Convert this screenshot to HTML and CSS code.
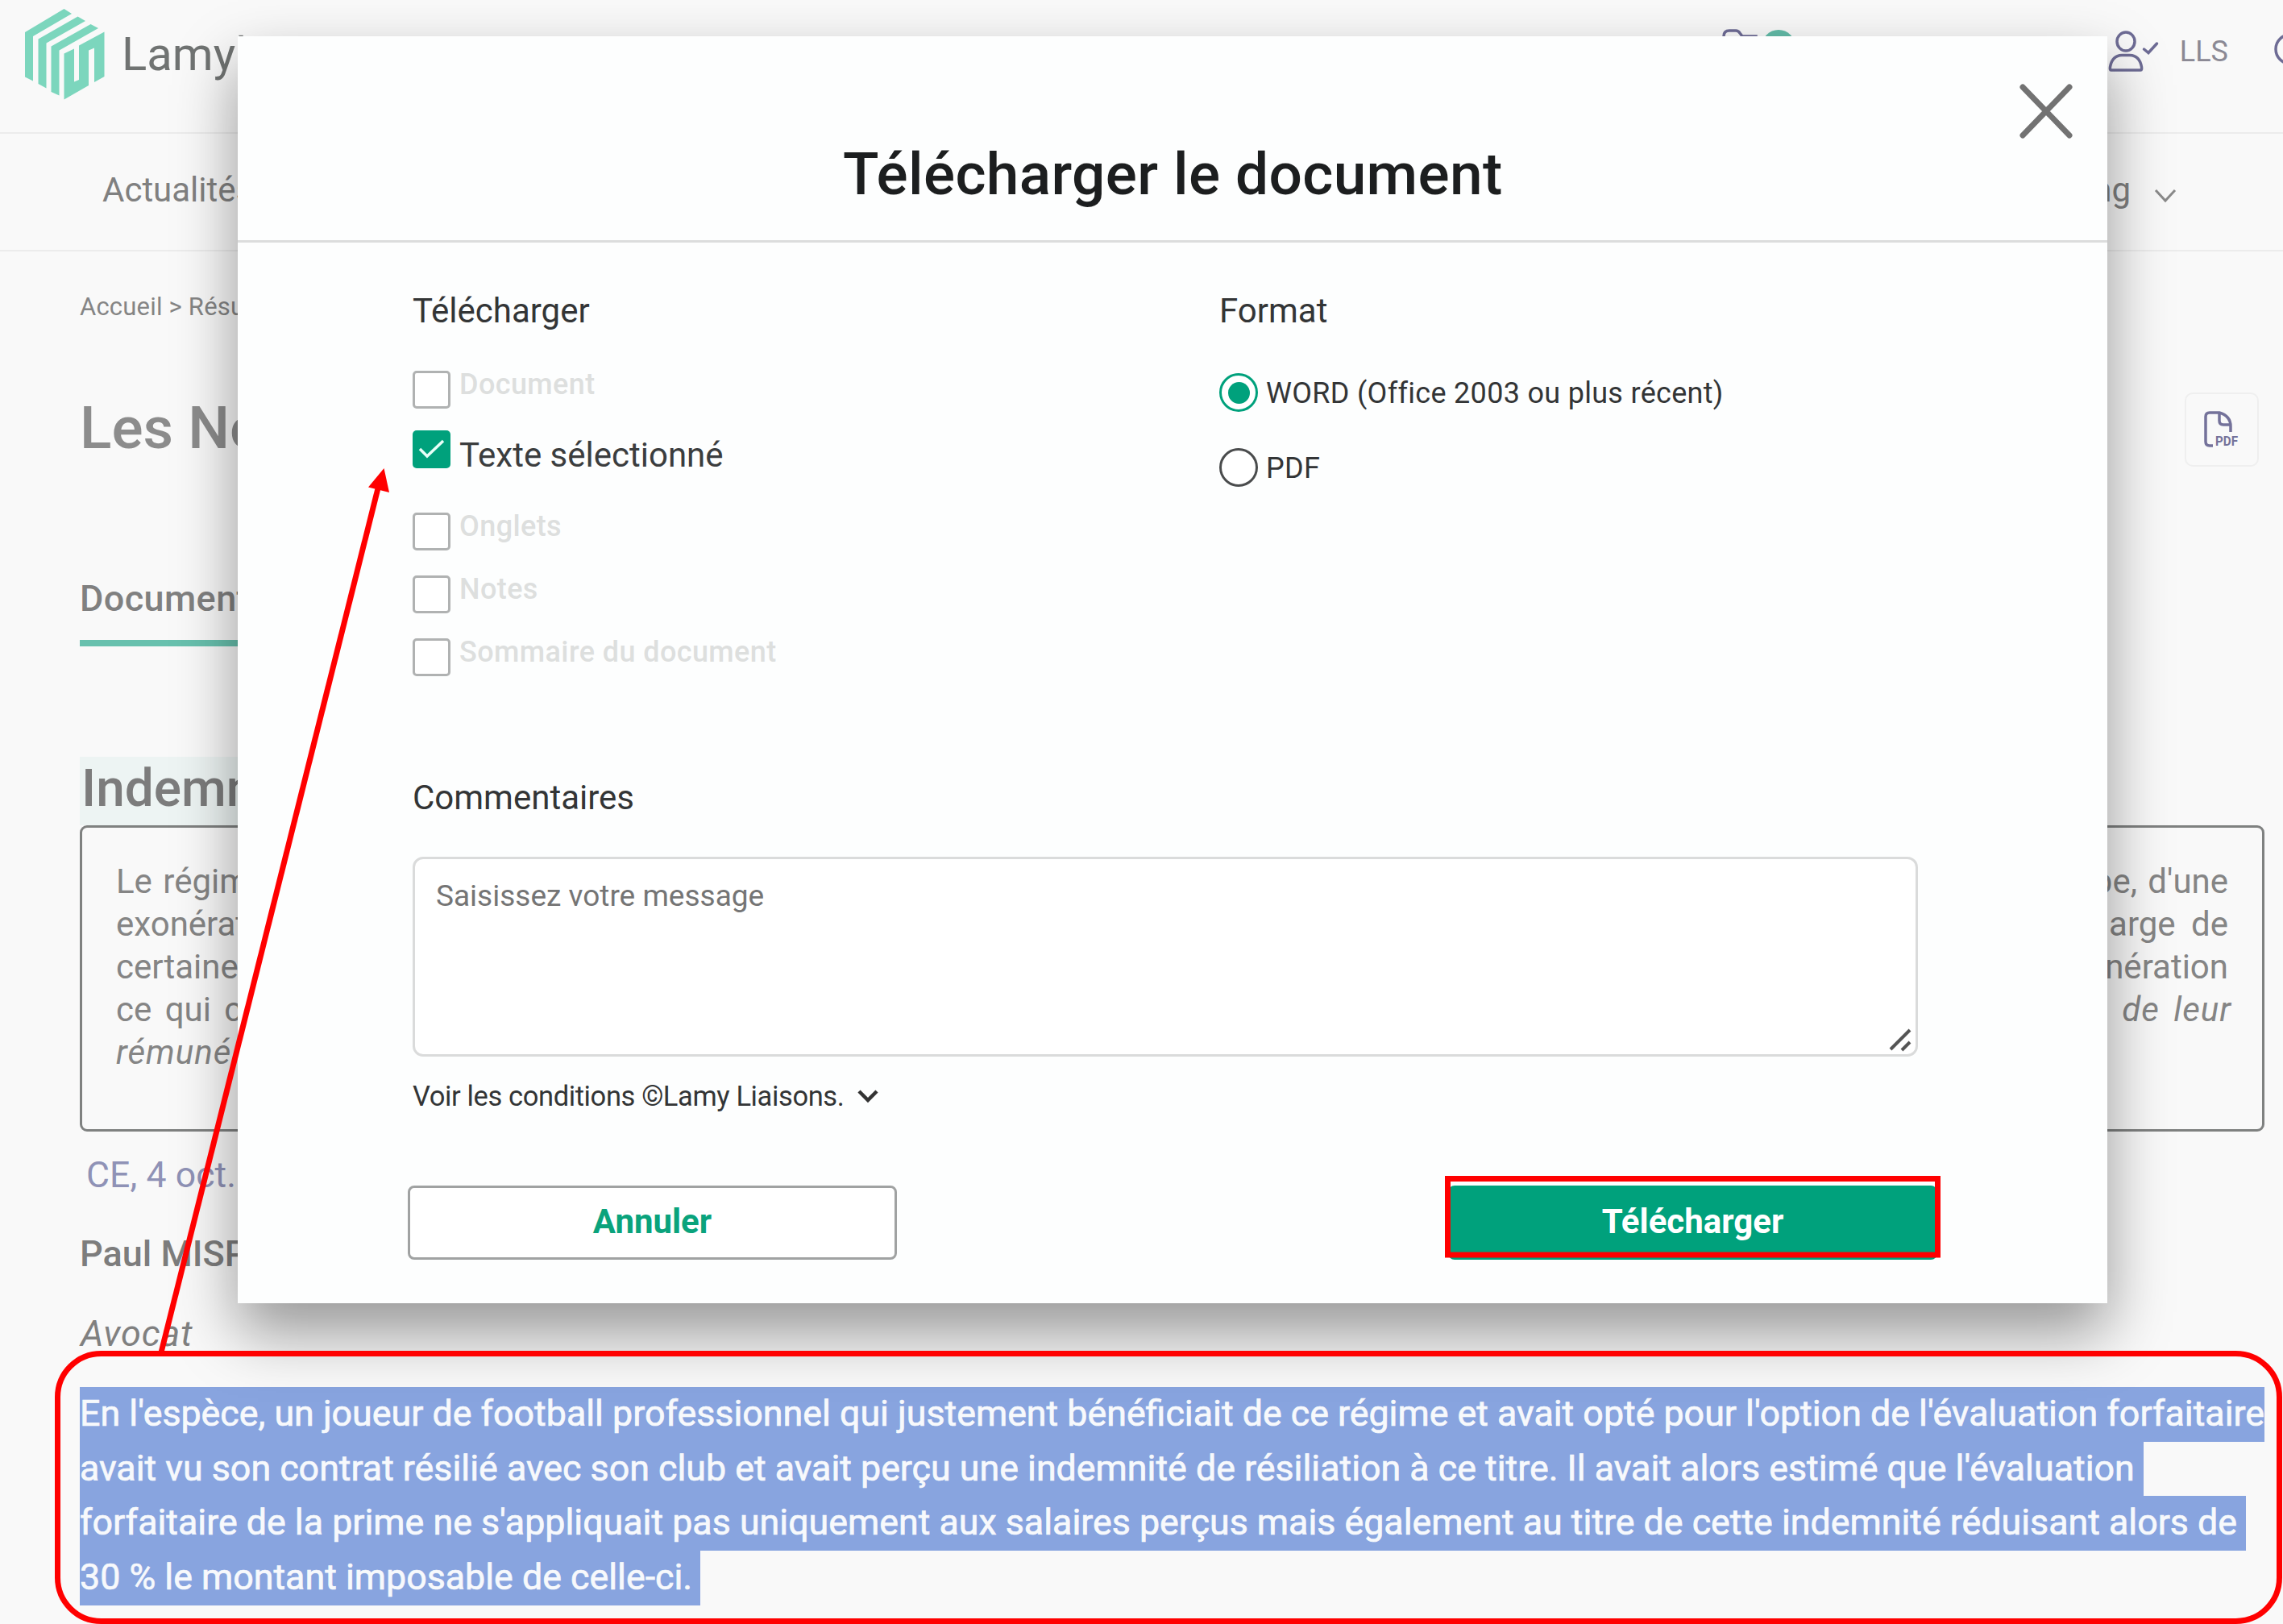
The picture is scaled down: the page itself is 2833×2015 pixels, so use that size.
FILE: index.html
```html
<!DOCTYPE html>
<html lang="fr">
<head>
<meta charset="utf-8">
<title>Télécharger le document</title>
<link rel="stylesheet" href="styles.css">
</head>
<body>
<div class="page">
  <header class="topbar">
    <div class="brand">
      <svg class="brand-logo" width="102" height="116" viewBox="30 9 102 116"><path d="M31 40 79.500 11 89 17 41 45V100.500L31 95.500ZM47.500 48.500 96.500 20.500 106 26 57.500 53.500V109.500L47.500 104ZM63.500 57.500 112.500 30 122 35 73.500 62.500V118.500L63.500 114ZM79.500 66.500 92 60.500V101.500L98 99V56.500L129.500 39.500V95L117 102V59.500L110 62.500V106L79.500 123.500Z"/></svg>
      <span class="brand-name">Lamyline</span>
    </div>
    <div class="tools">
      <svg class="tool-folder" width="100" height="50" viewBox="0 0 100 50"><path d="M4 46V13Q4 6 11 6H19Q22 6 24 9L27 13H44V46Z"/><circle cx="72" cy="26" r="21"/></svg>
      <svg class="tool-user" width="64" height="52" viewBox="0 0 64 52"><ellipse cx="22" cy="13.500" rx="11" ry="11.500"/><path d="M3.500 49Q2 49 2.500 45Q5 31 17 30.500H27Q39 31 41.500 45Q42 49 40.500 49ZM44.500 23 50 27.500 60.500 16"/></svg>
      <span class="tool-label">LLS</span>
      <svg class="tool-help" width="12" height="44" viewBox="0 0 12 44"><circle cx="21" cy="22" r="18"/></svg>
    </div>
  </header>
  <nav class="menu">
    <span class="menu-item">Actualités</span>
    <span class="menu-item menu-last">ng<svg width="28" height="18" viewBox="0 0 28 18"><path d="M2 2 14 15 26 2"/></svg></span>
  </nav>
  <main class="content">
    <div class="crumbs">Accueil &gt; Résu</div>
    <div class="title-row">
      <h1 class="doc-title">Les No</h1>
      <span class="pdf-button">
        <svg width="44" height="46" viewBox="0 0 44 46"><path d="M11 43H7Q2 43 2 38V7Q2 2 7 2H19Q33 6 33 19V26M19 2V12Q19 17 24 17H33"/><text x="14" y="43" textLength="28" lengthAdjust="spacingAndGlyphs">PDF</text></svg>
      </span>
    </div>
    <div class="tab">Document</div>
    <h2 class="article-title">Indemnit</h2>
    <div class="abstract">
      <div class="abstract-line"><span>Le régime</span><span>pe, d'une</span></div>
      <div class="abstract-line"><span>exonération</span><span class="wide">arge de</span></div>
      <div class="abstract-line"><span>certaines</span><span>nération</span></div>
      <div class="abstract-line"><span class="spaced">ce qui c</span><i class="last-word">de leur</i></div>
      <div class="abstract-line"><i>rémuné</i></div>
    </div>
    <div class="reference">CE, 4 oct.</div>
    <div class="author">Paul MISP</div>
    <div class="role">Avocat</div>
    <div class="selection">
      <div class="sel sel-1">En l'espèce, un joueur de football professionnel qui justement bénéficiait de ce régime et avait opté pour l'option de l'évaluation forfaitaire</div>
      <div class="sel sel-2">avait vu son contrat résilié avec son club et avait perçu une indemnité de résiliation à ce titre. Il avait alors estimé que l'évaluation</div>
      <div class="sel sel-3">forfaitaire de la prime ne s'appliquait pas uniquement aux salaires perçus mais également au titre de cette indemnité réduisant alors de</div>
      <div class="sel sel-4">30 % le montant imposable de celle-ci.</div>
    </div>
  </main>
</div>

<section class="modal">
  <header class="modal-head">
    <h2 class="modal-title">Télécharger le document</h2>
    <svg class="modal-close" width="68" height="70" viewBox="0 0 68 70"><path d="M5 5 63 65M63 5 5 65"/></svg>
  </header>
  <div class="modal-body">
    <div class="options">
      <div class="group">
        <h3 class="label">Télécharger</h3>
        <ul class="checks">
          <li class="check"><span class="box"></span><span class="check-text">Document</span></li>
          <li class="check checked"><span class="box"><svg width="33" height="28" viewBox="0 0 33 28"><path d="M2 13 11 22 31 3"/></svg></span><span class="check-text">Texte sélectionné</span></li>
          <li class="check"><span class="box"></span><span class="check-text">Onglets</span></li>
          <li class="check"><span class="box"></span><span class="check-text">Notes</span></li>
          <li class="check"><span class="box"></span><span class="check-text">Sommaire du document</span></li>
        </ul>
      </div>
      <div class="group">
        <h3 class="label">Format</h3>
        <ul class="radios">
          <li class="radio on"><span class="dot"></span><span class="radio-text">WORD (Office 2003 ou plus récent)</span></li>
          <li class="radio"><span class="dot"></span><span class="radio-text">PDF</span></li>
        </ul>
      </div>
    </div>
    <h3 class="label">Commentaires</h3>
    <div class="message">
      <span>Saisissez votre message</span>
      <svg class="grip" width="30" height="32" viewBox="0 0 30 32"><path d="M3 29 27 5M17 30 27 20"/></svg>
    </div>
    <div class="terms"><span>Voir les conditions ©Lamy Liaisons.</span><svg width="28" height="18" viewBox="0 0 28 18"><path d="M3 3 14 14 25 3"/></svg></div>
    <div class="actions">
      <div class="button cancel"><span>Annuler</span></div>
      <div class="button submit"><span>Télécharger</span></div>
    </div>
  </div>
</section>

<svg class="notes" width="2833" height="2015" viewBox="0 0 2833 2015">
  <rect x="71.500" y="1679.500" width="2757" height="332" rx="54"/>
  <rect x="1796.500" y="1462.500" width="608" height="94.500"/>
  <path d="M200 1678 469 606"/>
  <path class="head" d="M476.500 581 457 604.500 483 611Z"/>
</svg>
</body>
</html>
```
FILE: styles.css
```css
* { box-sizing: border-box; }
body {
  margin: 0;
  position: relative;
  width: 2833px;
  height: 2015px;
  overflow: hidden;
  background: #f9f9f9;
  font-family: Roboto, "Liberation Sans", sans-serif;
  color: #808080;
}
h1, h2, h3, ul { margin: 0; padding: 0; font-weight: 400; list-style: none; }
svg { display: block; flex: none; fill: none; }
span, i, div, h1, h2, h3 { white-space: nowrap; }

.topbar { display: flex; justify-content: space-between; height: 166px; border-bottom: 2px solid #ececec; }
.brand { display: flex; align-items: flex-start; gap: 19px; padding: 9px 0 0 30px; }
.brand-logo { fill: #7cd6bd; }
.brand-name { font-size: 58px; line-height: 117px; color: #707372; }
.tools { display: flex; align-items: flex-start; stroke: #6e6c95; stroke-width: 3.500px; }
.tool-folder { margin: 32px 381px 0 0; }
.tool-folder circle { fill: #62bca8; stroke: none; }
.tool-user { margin: 38px 25px 0 0; stroke-linecap: round; }
.tool-label { font-size: 36px; line-height: 44px; margin: 42px 56px 0 0; color: #8b8994; }
.tool-help { margin-top: 39px; }

.menu { display: flex; justify-content: space-between; align-items: center; height: 146px; padding: 0 132px 5px 127px; border-bottom: 2px solid #ececec; }
.menu-item { font-size: 42px; line-height: 50px; color: #808080; }
.menu-last { display: flex; align-items: center; gap: 29px; }
.menu-last svg { margin-top: 14px; stroke: #8a8a8a; stroke-width: 3px; }

.content { padding: 0 0 0 99px; }
.crumbs { margin-top: 49px; font-size: 31px; line-height: 40px; letter-spacing: .2px; color: #858585; }
.title-row { display: flex; justify-content: space-between; margin-top: 86px; padding-right: 30px; }
.doc-title { font-size: 73px; line-height: 89px; font-weight: 500; color: #8c8c8c; }
.pdf-button { display: flex; align-items: center; justify-content: center; width: 92px; height: 92px; border: 2px solid #efefef; border-radius: 10px; stroke: #74729a; stroke-width: 3.500px; }
.pdf-button svg { overflow: visible; }
.pdf-button text { font: 700 16px Roboto, sans-serif; fill: #74729a; stroke: none; }
.tab { width: 260px; margin-top: 134px; padding-bottom: 21px; border-bottom: 8px solid #68c1ae; font-size: 45px; line-height: 60px; font-weight: 500; letter-spacing: .4px; color: #808080; }
.article-title { width: 300px; margin-top: 137px; padding: 0 0 5px 2px; background: #edf4f3; font-size: 64px; line-height: 80px; font-weight: 500; color: #7c7c7c; }
.abstract { width: 2711px; height: 380px; padding: 40px 42px 0 42px; border: 3px solid #7f8180; border-radius: 9px; font-size: 42px; line-height: 53px; color: #858585; word-spacing: 3px; }
.abstract-line { display: flex; justify-content: space-between; }
.abstract i { letter-spacing: 1px; }
.wide { word-spacing: 9px; }
.spaced { word-spacing: 6px; }
.last-word { margin-right: -4px; word-spacing: 6px; }
.reference { margin: 24px 0 0 8px; font-size: 44.500px; line-height: 60px; letter-spacing: .1px; color: #8f92b6; }
.author { margin-top: 38px; font-size: 45px; line-height: 60px; font-weight: 500; color: #7d7d7d; }
.role { margin: 39px 0 0 1px; font-size: 45px; line-height: 60px; font-style: italic; letter-spacing: .9px; }
.selection { margin-top: 36px; font-size: 44.750px; line-height: 65px; color: #f7f9fc; -webkit-text-stroke: .7px #f7f9fc; }
.sel { height: 67.700px; background: #88a4df; }
.sel-1 { width: 2711px; }
.sel-2 { width: 2561px; }
.sel-3 { width: 2688px; }
.sel-4 { width: 770px; }

.modal { position: absolute; left: 295px; top: 45px; width: 2320px; height: 1572px; background: #fdfefe; box-shadow: 0 36px 72px rgba(0, 0, 0, .4); color: #333536; }
.modal-head { display: flex; align-items: flex-start; height: 256px; border-bottom: 3px solid #dcdddd; padding-left: 751px; }
.modal-title { flex: 1; margin-top: 126px; font-size: 73px; line-height: 90px; font-weight: 500; letter-spacing: .37px; color: #1c1e1f; }
.modal-close { margin: 58px 42px 0 0; stroke: #727272; stroke-width: 7px; stroke-linecap: round; }
.modal-body { padding: 0 0 0 217px; }
.options { display: grid; grid-template-columns: 1001px 1fr; height: 663px; padding-top: 59px; }
.label { font-size: 42px; line-height: 51px; }
.checks { display: flex; flex-direction: column; gap: 31px; margin-top: 49px; }
.check { display: flex; gap: 11px; height: 47px; }
.check.checked { margin: -4px 0 24px; }
.box { display: flex; align-items: center; justify-content: center; width: 47px; height: 47px; border: 3px solid #b0b2b2; border-radius: 5px; background: #fff; }
.checked .box { border: 0; background: #00a17c; stroke: #e8fff8; stroke-width: 3.500px; }
.check-text { font-size: 36px; line-height: 35px; font-weight: 500; letter-spacing: .4px; color: #dddfde; }
.checked .check-text { font-size: 42px; line-height: 62px; font-weight: 400; letter-spacing: 0; color: #3b3d3e; }
.radios { display: flex; flex-direction: column; gap: 45px; margin-top: 52px; }
.radio { display: flex; align-items: center; gap: 10px; height: 48px; }
.dot { display: flex; align-items: center; justify-content: center; width: 48px; height: 48px; border: 3px solid #4a4c4d; border-radius: 50%; background: #fff; }
.on .dot { border-color: #00a17c; }
.on .dot::before { content: ""; width: 27px; height: 27px; border-radius: 50%; background: #00a17c; }
.radio-text { padding-top: 2px; font-size: 36px; line-height: 48px; letter-spacing: .3px; }
.message { display: flex; justify-content: space-between; align-items: flex-start; width: 1868px; height: 248px; margin-top: 48px; padding: 21px 4px 3px 26px; border: 3px solid #dadbdb; border-radius: 13px; background: #fff; font-size: 37px; line-height: 50px; color: #757575; }
.grip { align-self: flex-end; stroke: #555; stroke-width: 4px; }
.terms { display: flex; align-items: center; gap: 16px; margin-top: 25px; font-size: 34.500px; line-height: 48px; letter-spacing: -.39px; }
.terms svg { stroke: #333; stroke-width: 4.500px; }
.actions { display: flex; justify-content: space-between; width: 1898px; margin: 87px 0 0 -6px; }
.button { display: flex; align-items: center; justify-content: center; width: 607px; height: 92px; padding-bottom: 3px; border-radius: 8px; font-size: 42px; font-weight: 700; }
.cancel { border: 3px solid #a0a2a2; background: #fff; color: #0aa37c; }
.submit { background: #00a17c; color: #fff; }

.notes { position: absolute; left: 0; top: 0; stroke: #f00; stroke-width: 7px; pointer-events: none; }
.notes .head { fill: #f00; stroke: none; }
```
